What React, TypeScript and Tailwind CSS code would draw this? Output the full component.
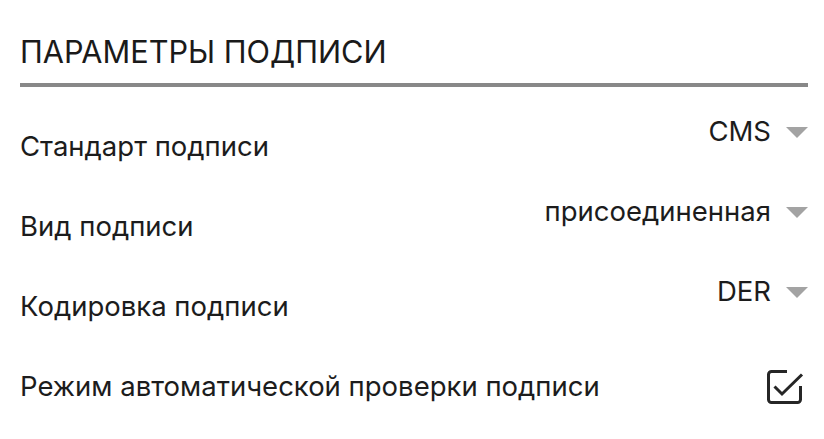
import { ReactNode } from "react";

const Caret = () => (
  <svg width="22" height="11" viewBox="0 0 22 11" className="ml-[15px] shrink-0">
    <path d="M0 0h22L11 11z" fill="#a3a3a3" />
  </svg>
);

const CheckIcon = () => (
  <svg width="40" height="40" viewBox="0 0 40 40" className="mr-[4px]">
    <path
      d="M23 4.5H7.5a3 3 0 0 0-3 3v25a3 3 0 0 0 3 3h26a3 3 0 0 0 3-3V19"
      fill="none"
      stroke="#262626"
      strokeWidth="3"
    />
    <path d="M10.5 19.5l7.5 7.5L38 7.5" fill="none" stroke="#262626" strokeWidth="3" />
  </svg>
);

const Row = ({ label, children }: { label: string; children: ReactNode }) => (
  <div className="flex h-[80px] items-center justify-between">
    <span className="text-[27.5px] text-[#1c1c1c]">{label}</span>
    {children}
  </div>
);

const SelectValue = ({ value }: { value: string }) => (
  <div className="mb-[30px] flex items-center">
    <span className="text-[27.5px] text-[#1c1c1c]">{value}</span>
    <Caret />
  </div>
);

export default function App() {
  return (
    <div
      className="h-[439px] w-[824px] bg-white pl-[20px] pr-[16px] pt-[30px]"
      style={{ fontFamily: 'Inter, "Liberation Sans", Arial, sans-serif' }}
    >
      <h2 className="text-[30.7px] leading-[44px] text-[#1a1a1a]">ПАРАМЕТРЫ ПОДПИСИ</h2>
      <div className="mt-[9px] h-[4px] bg-[#888888]" />
      <div className="mt-[20px]">
        <Row label="Стандарт подписи">
          <SelectValue value="CMS" />
        </Row>
        <Row label="Вид подписи">
          <SelectValue value="присоединенная" />
        </Row>
        <Row label="Кодировка подписи">
          <SelectValue value="DER" />
        </Row>
        <Row label="Режим автоматической проверки подписи">
          <CheckIcon />
        </Row>
      </div>
    </div>
  );
}
